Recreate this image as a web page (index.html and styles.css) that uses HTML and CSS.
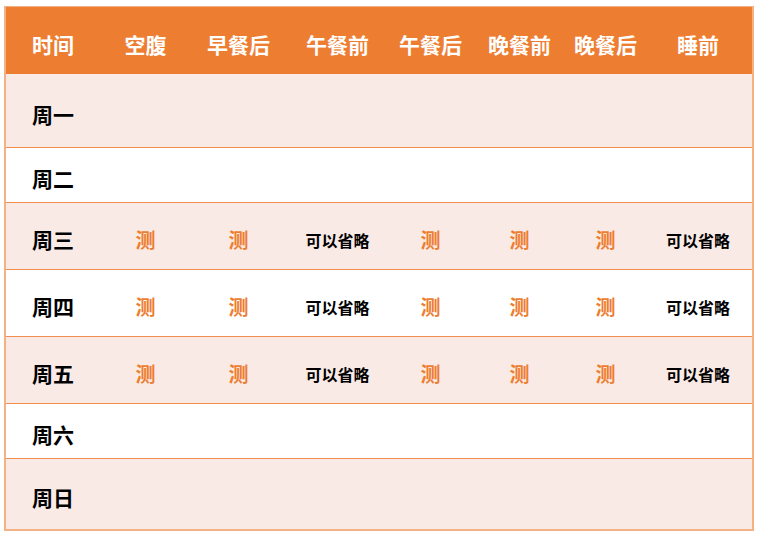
FILE: index.html
```html
<!DOCTYPE html>
<html lang="zh">
<head>
<meta charset="utf-8">
<link rel="stylesheet" href="styles.css">
</head>
<body>
<div class="sheet">
  <div class="row head">
    <div class="cell">时间</div><div class="cell">空腹</div><div class="cell">早餐后</div><div class="cell">午餐前</div><div class="cell">午餐后</div><div class="cell">晚餐前</div><div class="cell">晚餐后</div><div class="cell">睡前</div>
  </div>
  <div class="row tint r74">
    <div class="cell day">周一</div><div class="cell"></div><div class="cell"></div><div class="cell"></div><div class="cell"></div><div class="cell"></div><div class="cell"></div><div class="cell"></div>
  </div>
  <div class="row r55">
    <div class="cell day">周二</div><div class="cell"></div><div class="cell"></div><div class="cell"></div><div class="cell"></div><div class="cell"></div><div class="cell"></div><div class="cell"></div>
  </div>
  <div class="row tint r67">
    <div class="cell day">周三</div><div class="cell test">测</div><div class="cell test">测</div><div class="cell opt">可以省略</div><div class="cell test">测</div><div class="cell test">测</div><div class="cell test">测</div><div class="cell opt">可以省略</div>
  </div>
  <div class="row r67">
    <div class="cell day">周四</div><div class="cell test">测</div><div class="cell test">测</div><div class="cell opt">可以省略</div><div class="cell test">测</div><div class="cell test">测</div><div class="cell test">测</div><div class="cell opt">可以省略</div>
  </div>
  <div class="row tint r67">
    <div class="cell day">周五</div><div class="cell test">测</div><div class="cell test">测</div><div class="cell opt">可以省略</div><div class="cell test">测</div><div class="cell test">测</div><div class="cell test">测</div><div class="cell opt">可以省略</div>
  </div>
  <div class="row r55">
    <div class="cell day">周六</div><div class="cell"></div><div class="cell"></div><div class="cell"></div><div class="cell"></div><div class="cell"></div><div class="cell"></div><div class="cell"></div>
  </div>
  <div class="row tint last">
    <div class="cell day">周日</div><div class="cell"></div><div class="cell"></div><div class="cell"></div><div class="cell"></div><div class="cell"></div><div class="cell"></div><div class="cell"></div>
  </div>
</div>
</body>
</html>
```

FILE: styles.css
```css
* { box-sizing: border-box; }
html, body { margin: 0; padding: 0; background: #ffffff; }
body {
  font-family: "Noto Sans CJK SC", "Noto Sans", sans-serif;
  font-weight: 700;
}
.sheet {
  margin: 6px 0 0 4px;
  width: 750px;
  border: 2px solid #F4B183;
  border-top: 1px solid #F4B183;
}
.row {
  display: grid;
  grid-template-columns: 94px 91px 95px 103px 83px 95px 77px 108px;
  border-bottom: 1px solid #F08D4F;
  background: #ffffff;
}
.row.head {
  height: 67px;
  background: #ED7D31;
  color: #ffffff;
  font-size: 21px;
  border-bottom: none;
}
.tint { background: #FAEAE6; }
.r74 { height: 74px; }
.r55 { height: 55px; }
.r67 { height: 67px; }
.last { height: 70px; border-bottom: none; }
.cell {
  display: flex;
  align-items: center;
  justify-content: center;
  padding-top: 7px;
  white-space: nowrap;
  line-height: 1;
}
.day { font-size: 21px; color: #000000; }
.test { font-size: 20px; color: #ED7D31; }
.opt { font-size: 16px; color: #000000; }
```
